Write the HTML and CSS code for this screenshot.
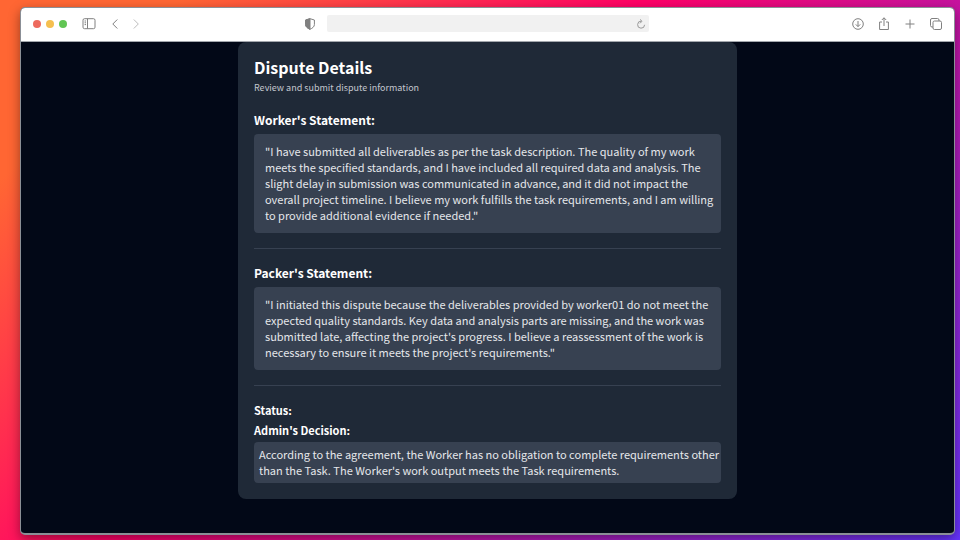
FILE: index.html
```html
<!DOCTYPE html>
<html lang="en">
<head>
<meta charset="utf-8">
<title>Dispute Details</title>
<link rel="stylesheet" href="styles.css">
</head>
<body>
<div class="window">
  <header class="toolbar">
    <div class="side">
      <div class="lights"><span class="light red"></span><span class="light yellow"></span><span class="light green"></span></div>
      <button class="tool sidebar" aria-label="Sidebar"><svg viewBox="0 0 14 14"><rect x="1" y="1.7" width="12" height="10" rx="1.5"/><path d="M5.5 1.7v10M2.6 4h1.4M2.6 5.8h1.4M2.6 7.6h1.4"/></svg></button>
      <button class="tool" aria-label="Back"><svg viewBox="0 0 14 14"><path d="M9.3 2.5 4.8 7l4.500 4.500"/></svg></button>
      <button class="tool forward" aria-label="Forward" disabled><svg viewBox="0 0 14 14"><path d="M4.800 2.500 9.300 7l-4.500 4.500"/></svg></button>
      <button class="tool shield" aria-label="Privacy"><svg viewBox="0 0 14 14"><path d="M7 1.700 11.400 3V7.500c0 2.300-2 3.700-4.400 4.800C4.600 11.200 2.600 9.800 2.600 7.500V3Z"/><path d="M7 1.700v10.600C4.600 11.200 2.600 9.800 2.600 7.500V3Z" fill="currentColor"/></svg></button>
    </div>
    <div class="address">
      <input type="text" aria-label="Address">
      <button class="tool reload" aria-label="Reload"><svg viewBox="0 0 14 14"><path d="M10.600 7.800A3.500 3.500 0 1 1 7.400 4.200M6 2.400l2 1.900-2 2"/></svg></button>
    </div>
    <div class="side actions">
      <button class="tool" aria-label="Downloads"><svg viewBox="0 0 14 14"><circle cx="7" cy="7" r="5.300"/><path d="M7 4v5.500M4.800 7.400 7 9.600l2.200-2.200"/></svg></button>
      <button class="tool" aria-label="Share"><svg viewBox="0 0 14 14"><path d="M5 5H2.600v7.500h8.800V5H9M7 9V.8M4.800 3 7 .8 9.200 3"/></svg></button>
      <button class="tool" aria-label="New tab"><svg viewBox="0 0 14 14"><path d="M7 2.500v9M2.500 7h9"/></svg></button>
      <button class="tool" aria-label="Tab overview"><svg viewBox="0 0 14 14"><rect x="4" y="4" width="8.500" height="8.500" rx="1.500"/><path d="M4 10H3a1.500 1.500 0 0 1-1.500-1.500V3A1.500 1.500 0 0 1 3 1.500h5.500A1.500 1.500 0 0 1 10 3v1"/></svg></button>
    </div>
  </header>
  <main class="page">
    <article class="card">
      <h1>Dispute Details</h1>
      <p class="subtitle">Review and submit dispute information</p>
      <section class="statement">
        <h2>Worker's Statement:</h2>
        <p class="box">"I have submitted all deliverables as per the task description. The quality of my work<br>meets the specified standards, and I have included all required data and analysis. The<br>slight delay in submission was communicated in advance, and it did not impact the<br>overall project timeline. I believe my work fulfills the task requirements, and I am willing<br>to provide additional evidence if needed."</p>
      </section>
      <section class="statement">
        <h2>Packer's Statement:</h2>
        <p class="box">"I initiated this dispute because the deliverables provided by worker01 do not meet the<br>expected quality standards. Key data and analysis parts are missing, and the work was<br>submitted late, affecting the project's progress. I believe a reassessment of the work is<br>necessary to ensure it meets the project's requirements."</p>
      </section>
      <section class="decision">
        <h3>Status:</h3>
        <h3>Admin's Decision:</h3>
        <p class="box tight">According to the agreement, the Worker has no obligation to complete requirements other<br>than the Task. The Worker's work output meets the Task requirements.</p>
      </section>
    </article>
  </main>
</div>
</body>
</html>
```
FILE: styles.css
```css
* { box-sizing: border-box; }
h1, h2, h3, p { margin: 0; }

body {
  margin: 0;
  min-height: 100vh;
  display: flex;
  padding: 7px 5px 5px 20px;
  background: linear-gradient(135deg, #ff6633 12%, #ff0066 43%, #6633ff 100%);
  font-family: "Noto Sans CJK SC", "Open Sans", sans-serif;
  color: #fff;
}

.window {
  flex: 1;
  display: flex;
  flex-direction: column;
  border: 1px solid #8b8f96;
  border-bottom-width: 2px;
  border-radius: 5px;
  overflow: hidden;
  background: #020817;
  box-shadow: 0 4px 12px rgba(0, 0, 0, 0.4);
}

.toolbar {
  display: grid;
  grid-template-columns: 1fr minmax(0, 322px) 1fr;
  align-items: center;
  height: 34px;
  padding: 0 11px 2px 12px;
  background: #fff;
  border-bottom: 1px solid #a3a7ad;
}
.side { display: flex; align-items: center; }
.lights { display: flex; gap: 5px; }
.light { width: 8px; height: 8px; border-radius: 50%; }
.red { background: #ed6a5e; }
.yellow { background: #f5bf4f; }
.green { background: #61c554; }

.tool {
  flex: none;
  width: 14px;
  height: 14px;
  padding: 0;
  border: 0;
  background: none;
  color: #808080;
}
.tool svg {
  display: block;
  width: 100%;
  height: 100%;
  fill: none;
  stroke: currentColor;
}
.sidebar { margin: 0 12px 0 15px; }
.forward { margin-left: 7px; color: #bdbdbd; }
.shield { margin-left: auto; margin-right: 10px; }
.actions { justify-content: flex-end; gap: 12px; }

.address {
  display: flex;
  align-items: center;
  height: 17px;
  padding-right: 1px;
  border-radius: 2px;
  background: #f1f1f1;
}
.address input {
  flex: 1;
  min-width: 0;
  border: 0;
  outline: 0;
  background: none;
  font-size: 10px;
}
.reload { color: #999; }

.page { flex: 1; padding: 0 16px 32px; }
.card {
  max-width: 499px;
  margin: 0 auto;
  padding: 13px 16px 16px;
  border-radius: 8px;
  background: #1f2937;
}
h1 { margin-bottom: 1px; font-size: 16px; line-height: 24px; font-weight: 700; }
.subtitle { font-size: 9px; line-height: 16px; color: #c3c7ce; }
h2 { margin-bottom: 6px; font-size: 12px; line-height: 16px; font-weight: 700; }
h3 { font-size: 11px; line-height: 16px; font-weight: 700; }
.statement {
  padding: 16px 0 15px;
  border-bottom: 1px solid #374151;
}
.box {
  padding: 9px 0 10px 11px;
  border-radius: 4px;
  background: #374151;
  font-size: 11px;
  line-height: 16px;
  white-space: nowrap;
  color: #e5e7eb;
}
.decision {
  display: grid;
  gap: 4px;
  padding-top: 16px;
}
.tight { padding: 4px 0 5px 5px; }
```
